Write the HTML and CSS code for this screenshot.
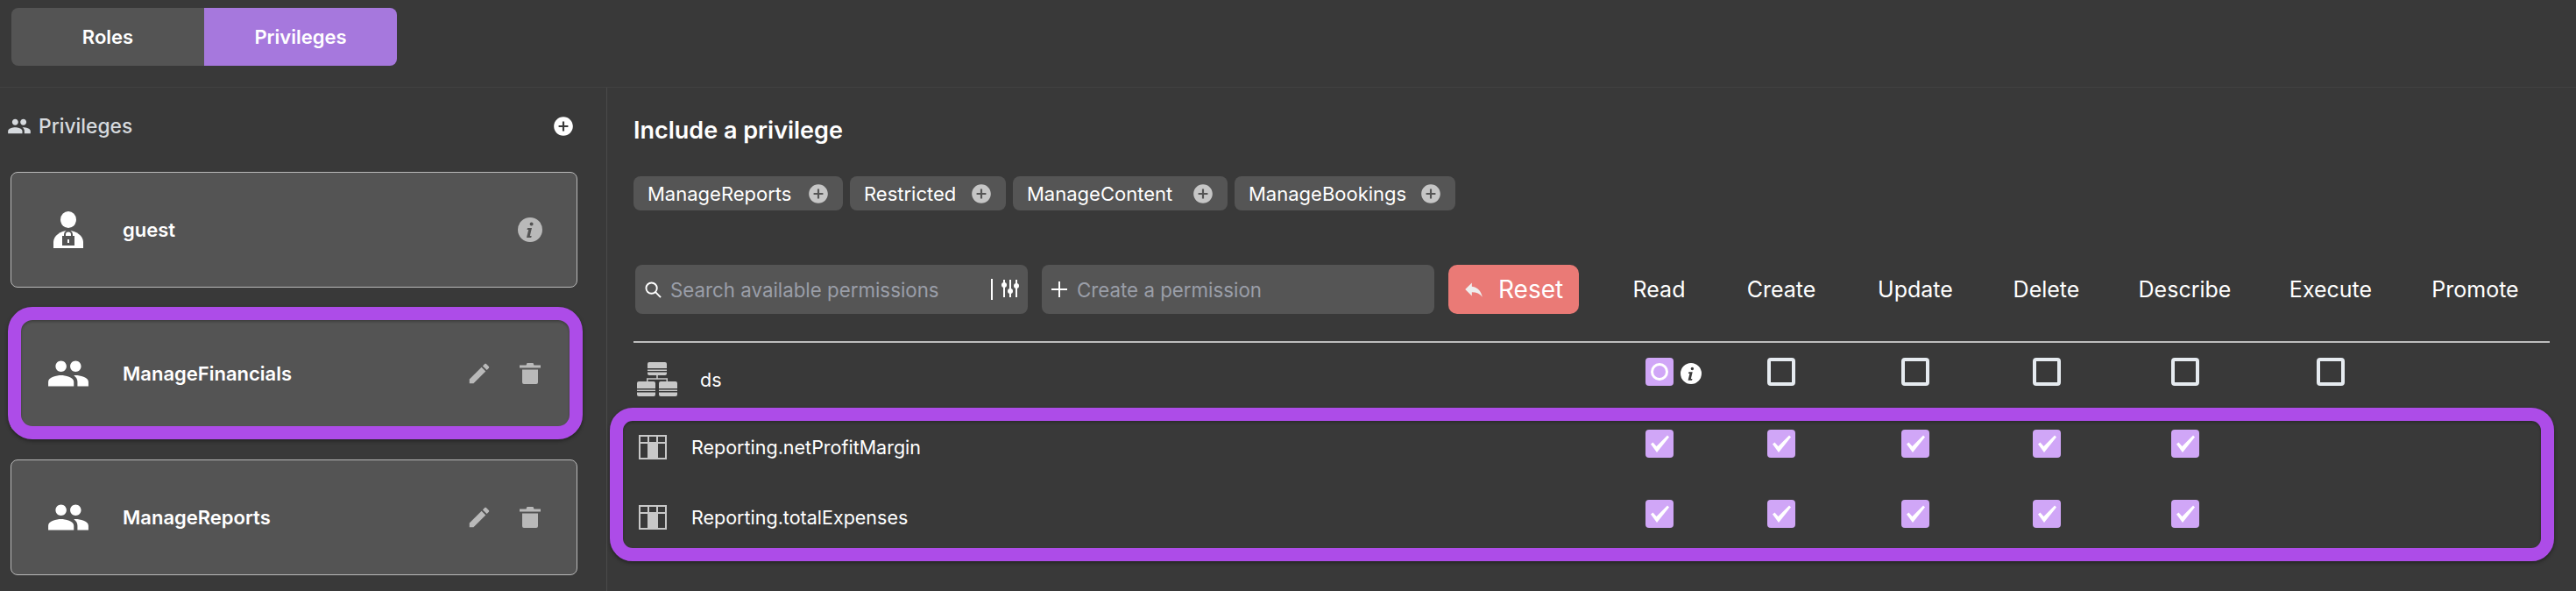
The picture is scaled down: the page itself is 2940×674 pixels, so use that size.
FILE: index.html
```html
<!DOCTYPE html>
<html>
<head>
<title>Privileges</title>
<link rel="stylesheet" href="styles.css">
</head>
<body>
<svg class="defs">
  <defs>
    <symbol id="i-group" viewBox="0 0 24 24"><path d="M16 11c1.66 0 2.99-1.34 2.99-3S17.66 5 16 5c-1.66 0-3 1.34-3 3s1.34 3 3 3zm-8 0c1.66 0 2.99-1.34 2.99-3S9.66 5 8 5C6.34 5 5 6.34 5 8s1.34 3 3 3zm0 2c-2.33 0-7 1.17-7 3.5V19h14v-2.5c0-2.33-4.67-3.5-7-3.5zm8 0c-.29 0-.62.02-.97.05 1.16.84 1.97 1.97 1.97 3.45V19h6v-2.5c0-2.33-4.67-3.5-7-3.5z"/></symbol>
    <symbol id="i-edit" viewBox="0 0 24 24"><path d="M3 17.25V21h3.75L17.81 9.94l-3.75-3.75L3 17.25zM20.71 7.04c.39-.39.39-1.02 0-1.41l-2.34-2.34c-.39-.39-1.02-.39-1.41 0l-1.83 1.83 3.75 3.75 1.83-1.83z"/></symbol>
    <symbol id="i-trash" viewBox="0 0 24 24"><path d="M0 2.500h7.500L8.500 0h7l1 2.500H24v3H0zM3 7.500h18V22a2 2 0 0 1-2 2H5a2 2 0 0 1-2-2z"/></symbol>
    <symbol id="i-add" viewBox="0 0 24 24"><path d="M12 2C6.48 2 2 6.48 2 12s4.48 10 10 10 10-4.48 10-10S17.52 2 12 2zm5 11h-4v4h-2v-4H7v-2h4V7h2v4h4v2z"/></symbol>
    <symbol id="i-info" viewBox="0 0 28 28"><path fill-rule="evenodd" d="M14 0a14 14 0 1 0 0 28a14 14 0 0 0 0-28zM15.600 5.500a2 2 0 1 1 0 4a2 2 0 0 1 0-4zM11 12h5l-2.200 9h1.900l-.5 2H10l2.200-9h-1.700z"/></symbol>
    <symbol id="i-table" viewBox="0 0 32 28"><path fill-rule="evenodd" d="M0 0h32v28H0zM2 2v6h8V2zM12 2v6h8V2zM22 2v6h8V2zM2 10v16h8V10zM22 10v16h8V10z"/></symbol>
    <symbol id="i-ds" viewBox="0 0 46 39">
      <path d="M12 2a2 2 0 0 1 2-2h18a2 2 0 0 1 2 2v5H12zM12 8.500h22V10H12zM12 11.500h22V13a2 2 0 0 1-2 2H14a2 2 0 0 1-2-2zM0 24a2 2 0 0 1 2-2h17a2 2 0 0 1 2 2v6H0zM0 31.500h21V33H0zM0 34.500h21V37a2 2 0 0 1-2 2H2a2 2 0 0 1-2-2zM25 24a2 2 0 0 1 2-2h17a2 2 0 0 1 2 2v6H25zM25 31.500h21V33H25zM25 34.500h21V37a2 2 0 0 1-2 2H27a2 2 0 0 1-2-2z"/>
      <path d="M22.200 15h1.600v3.200H35V22h-1.500v-2.300h-21V22H11v-3.800h11.200z"/>
    </symbol>
    <symbol id="i-check" viewBox="0 0 32 32"><path d="M6 16.500l2.500-2 4 4.500L25 6.500l2 2L13 26z"/></symbol>
  </defs>
</svg>

<header class="topbar">
  <div class="tabs">
    <div class="tab">Roles</div>
    <div class="tab tab-on">Privileges</div>
  </div>
</header>

<div class="main">
  <aside class="side">
    <div class="side-head">
      <svg class="side-group"><use href="#i-group"/></svg>
      <span class="side-title">Privileges</span>
      <svg class="side-add"><use href="#i-add"/></svg>
    </div>

    <div class="card">
      <svg class="guest-icon" viewBox="0 0 34 42">
        <ellipse cx="17" cy="9.500" rx="9" ry="9.500"/>
        <path d="M0 42V35C0 28 8 22 17 22s17 6 17 13v7z"/>
        <path class="lock" d="M10 28h14v11H10z"/>
        <path class="shackle" d="M13 28v-1.500a4 4 0 0 1 8 0V28"/>
        <path d="M16 32h2v4h-2z"/>
      </svg>
      <span class="card-name">guest</span>
      <svg class="card-info"><use href="#i-info"/></svg>
    </div>

    <div class="card">
      <svg class="card-icon"><use href="#i-group"/></svg>
      <span class="card-name">ManageFinancials</span>
      <svg class="act-edit"><use href="#i-edit"/></svg>
      <svg class="act-trash"><use href="#i-trash"/></svg>
      <div class="mark mark-card"></div>
    </div>

    <div class="card">
      <svg class="card-icon"><use href="#i-group"/></svg>
      <span class="card-name">ManageReports</span>
      <svg class="act-edit"><use href="#i-edit"/></svg>
      <svg class="act-trash"><use href="#i-trash"/></svg>
    </div>
  </aside>

  <section class="content">
    <h2 class="title">Include a privilege</h2>
    <div class="chips">
      <div class="chip chip-reports">ManageReports <svg><use href="#i-add"/></svg></div>
      <div class="chip chip-restricted">Restricted <svg><use href="#i-add"/></svg></div>
      <div class="chip chip-content">ManageContent <svg><use href="#i-add"/></svg></div>
      <div class="chip chip-bookings">ManageBookings <svg><use href="#i-add"/></svg></div>
    </div>

    <div class="perms">
      <div class="row row-head">
        <div class="tools">
          <div class="field">
            <svg class="field-search" viewBox="0 0 20 20"><circle cx="8" cy="8" r="6.500"/><path d="M12.500 12.500L19 19"/></svg>
            <span class="field-text">Search available permissions</span>
            <svg class="field-sliders" viewBox="0 0 32 26">
              <path d="M1 1v24M15 2v20M22 2v20M29 2v20"/>
              <circle class="dot" cx="15" cy="8" r="3"/><circle class="dot" cx="22" cy="15" r="3"/><circle class="dot" cx="29" cy="9" r="3"/>
            </svg>
          </div>
          <div class="field">
            <svg class="field-plus" viewBox="0 0 18 18"><path d="M9 0v18M0 9h18"/></svg>
            <span class="field-text">Create a permission</span>
          </div>
          <div class="reset">
            <svg viewBox="0 0 24 24"><path d="M10 9V5l-7 7 7 7v-4.100c5 0 8.500 1.600 11 5.100-1-5-4-10-11-11z"/></svg>
            Reset
          </div>
        </div>
        <div class="col">Read</div>
        <div class="col">Create</div>
        <div class="col">Update</div>
        <div class="col">Delete</div>
        <div class="col">Describe</div>
        <div class="col">Execute</div>
        <div class="col">Promote</div>
      </div>

      <div class="row row-ds">
        <div class="name"><svg class="ds-icon"><use href="#i-ds"/></svg><span>ds</span></div>
        <div class="cell cell-read"><span class="box box-on box-dot"></span><svg class="cell-info"><use href="#i-info"/></svg></div>
        <div class="cell"><span class="box"></span></div>
        <div class="cell"><span class="box"></span></div>
        <div class="cell"><span class="box"></span></div>
        <div class="cell"><span class="box"></span></div>
        <div class="cell"><span class="box"></span></div>
        <div class="cell"></div>
      </div>

      <div class="marked">
        <div class="row">
          <div class="name"><svg class="table-icon"><use href="#i-table"/></svg><span>Reporting.netProfitMargin</span></div>
          <div class="cell"><span class="box box-on"><svg><use href="#i-check"/></svg></span></div>
          <div class="cell"><span class="box box-on"><svg><use href="#i-check"/></svg></span></div>
          <div class="cell"><span class="box box-on"><svg><use href="#i-check"/></svg></span></div>
          <div class="cell"><span class="box box-on"><svg><use href="#i-check"/></svg></span></div>
          <div class="cell"><span class="box box-on"><svg><use href="#i-check"/></svg></span></div>
          <div class="cell"></div>
          <div class="cell"></div>
        </div>
        <div class="row">
          <div class="name"><svg class="table-icon"><use href="#i-table"/></svg><span>Reporting.totalExpenses</span></div>
          <div class="cell"><span class="box box-on"><svg><use href="#i-check"/></svg></span></div>
          <div class="cell"><span class="box box-on"><svg><use href="#i-check"/></svg></span></div>
          <div class="cell"><span class="box box-on"><svg><use href="#i-check"/></svg></span></div>
          <div class="cell"><span class="box box-on"><svg><use href="#i-check"/></svg></span></div>
          <div class="cell"><span class="box box-on"><svg><use href="#i-check"/></svg></span></div>
          <div class="cell"></div>
          <div class="cell"></div>
        </div>
        <div class="mark mark-rows"></div>
      </div>
    </div>
  </section>
</div>
</body>
</html>
```

FILE: styles.css
```css
body {
  margin: 0;
  height: 674px;
  overflow: hidden;
  background-color: #393939;
  color: #fff;
  font-family: Inter, "Liberation Sans", sans-serif;
}

.defs { display: none; }

/* top tabs */
.topbar {
  height: 100px;
  padding: 9px 0 0 13px;
  box-sizing: border-box;
  border-bottom: 1px solid #424242;
}
.tabs { display: flex; width: 440px; height: 66px; border-radius: 8px; overflow: hidden; }
.tab {
  flex: 1;
  display: flex;
  align-items: center;
  justify-content: center;
  background-color: #545454;
  font-size: 22px;
  font-weight: 600;
}
.tab-on { background-color: #a678dd; }

.main { display: flex; }

/* left column */
.side {
  width: 693px;
  height: 574px;
  box-sizing: border-box;
  padding: 0 33px 0 12px;
  border-right: 1px solid #4a4a4a;
  flex: none;
}
.side-head { display: flex; align-items: center; height: 87px; margin: 0 0 9px -5px; }
.side-group { width: 28px; height: 28px; fill: #d6dade; margin-left: 1px; }
.side-title { margin-left: 8px; font-size: 22.800px; font-weight: 500; color: #d6dade; }
.side-add { width: 26px; height: 26px; fill: #fff; margin-left: auto; margin-right: 3px; }

.card {
  position: relative;
  display: flex;
  align-items: center;
  height: 132px;
  box-sizing: border-box;
  margin-bottom: 32px;
  padding-left: 40px;
  background-color: #545454;
  border: 1px solid #b9b9b9;
  border-radius: 8px;
}
.guest-icon { width: 34px; height: 42px; fill: #fff; margin: 0 45px 0 8px; flex: none; }
.guest-icon .lock { fill: #545454; }
.guest-icon .shackle { fill: none; stroke: #545454; stroke-width: 2; }
.card-icon { width: 50px; height: 50px; fill: #fff; flex: none; margin-right: 37px; }
.card-name { font-size: 22px; font-weight: 600; }
.card-info { width: 28px; height: 28px; fill: #b9b9b9; margin-left: auto; margin-right: 39px; }
.act-edit { width: 30px; height: 30px; fill: #b9b9b9; margin-left: auto; margin-right: 31px; }
.act-trash { width: 24px; height: 24px; fill: #b9b9b9; margin-right: 41px; }

/* thick purple marks drawn over the shot */
.mark {
  position: absolute;
  box-sizing: border-box;
  border: 15px solid #ad4ce8;
  box-shadow: 0 2px 4px rgba(0,0,0,0.4), inset 0 2px 3px rgba(0,0,0,0.25);
}
.mark-card { top: -11px; bottom: -10px; left: -4px; right: -7px; border-radius: 28px; }
.mark-rows { top: 0; bottom: 0; left: -27px; right: -5px; border-radius: 26px; }

/* right column */
.content { flex: 1; padding: 29px 0 0 30px; }
.title { margin: 0; font-size: 27px; font-weight: 600; line-height: 40px; }
.chips { display: flex; gap: 8px; margin-top: 32px; }
.chip {
  display: flex;
  align-items: center;
  justify-content: space-between;
  height: 39px;
  box-sizing: border-box;
  padding: 0 15px 0 16px;
  background-color: #555;
  border-radius: 8px;
  font-size: 22px;
}
.chip svg { width: 26px; height: 26px; fill: #c6c6c6; }
.chip-reports { width: 239px; }
.chip-restricted { width: 178px; }
.chip-content { width: 245px; }
.chip-bookings { width: 252px; }

.perms { width: 2187px; margin-top: 62px; }
.row {
  display: grid;
  grid-template-columns: 1106px 129px 150px 156px 143px 173px 160px 170px;
  height: 80px;
}
.row-head {
  height: 89px;
  box-sizing: border-box;
  align-items: start;
  border-bottom: 2px solid #bdbdbd;
}
.tools { display: flex; gap: 16px; margin-left: 2px; }
.field {
  display: flex;
  align-items: center;
  width: 448px;
  height: 56px;
  box-sizing: border-box;
  padding: 0 10px 0 11px;
  background-color: #555;
  border-radius: 8px;
}
.field-text { font-size: 22.300px; color: #9a9ea8; }
.field-search { width: 19px; height: 19px; fill: none; stroke: #fff; stroke-width: 2; margin-right: 10px; flex: none; }
.field-plus { width: 18px; height: 18px; stroke: #fff; stroke-width: 2; margin-right: 11px; flex: none; }
.field-sliders { width: 32px; height: 26px; margin-left: auto; stroke: #fff; stroke-width: 2; fill: none; flex: none; }
.field-sliders .dot { fill: #fff; stroke: none; }
.reset {
  display: flex;
  align-items: center;
  gap: 15px;
  width: 149px;
  height: 56px;
  box-sizing: border-box;
  padding-left: 16px;
  flex: none;
  background-color: #ea7a76;
  border-radius: 10px;
  font-size: 28px;
}
.reset svg { width: 26px; height: 26px; fill: #eee; flex: none; }
.col { text-align: center; font-size: 25px; line-height: 56px; }

.row-ds { height: 74px; }
.row-ds .cell { padding-top: 17px; }
.name { display: flex; align-items: center; font-size: 21.500px; }
.row-ds .name { padding: 9px 0 0 4px; }
.ds-icon { width: 46px; height: 39px; fill: #c8c8c8; margin-right: 26px; }
.table-icon { width: 32px; height: 28px; fill: #c8c8c8; margin: 0 28px 0 6px; }
.marked { position: relative; padding: 5px 0 10px; }
.marked .cell { padding-top: 20px; }
.cell { display: flex; justify-content: center; box-sizing: border-box; }
.cell-read { justify-content: flex-start; padding-left: 49px; }
.box {
  display: block;
  width: 32px;
  height: 32px;
  box-sizing: border-box;
  border: 4px solid #e6ebf0;
  border-radius: 4px;
}
.box svg { display: block; width: 32px; height: 32px; fill: #fff; }
.box-on { background-color: #d0a6f7; border: 0; }
.box-dot { border: 0; position: relative; }
.box-dot::after {
  content: "";
  position: absolute;
  top: 6px;
  left: 6px;
  width: 20px;
  height: 20px;
  box-sizing: border-box;
  border: 3px solid #fff;
  border-radius: 50%;
}
.cell-info { width: 24px; height: 24px; fill: #fff; margin: 6px 0 0 8px; }
```
